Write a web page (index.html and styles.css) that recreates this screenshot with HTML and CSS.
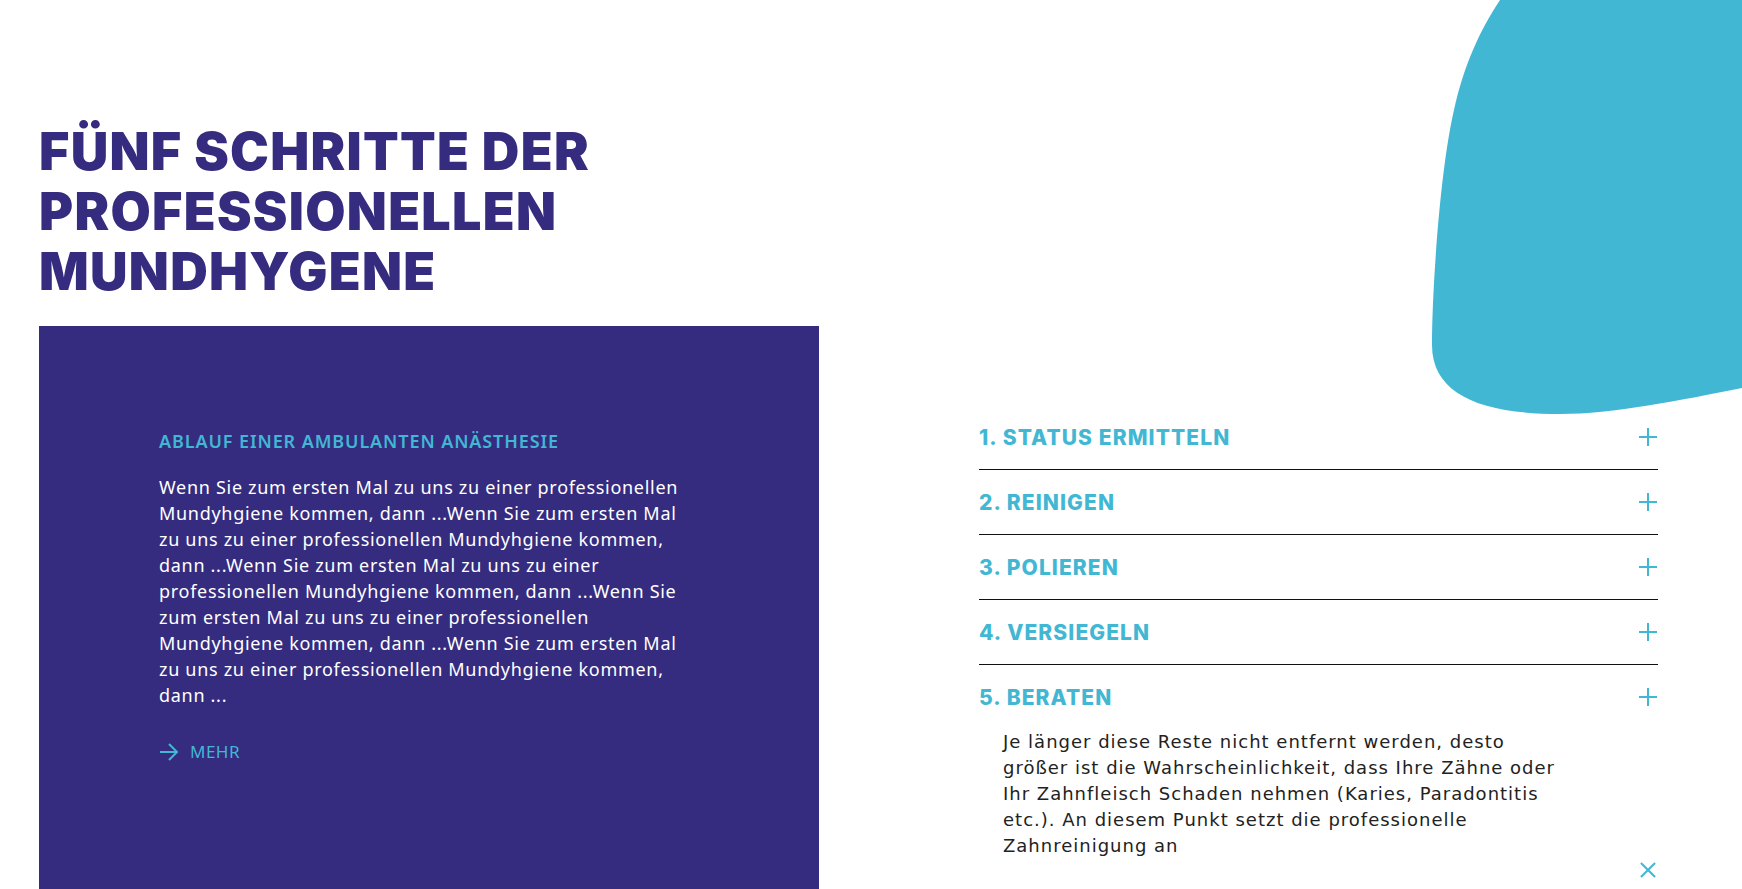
FILE: index.html
```html
<!DOCTYPE html>
<html lang="de">
<head>
<meta charset="utf-8">
<title>Fünf Schritte der professionellen Mundhygene</title>
<link rel="stylesheet" href="styles.css">
</head>
<body>
<div class="page">
  <svg class="blob" viewBox="0 0 310 416" width="310" height="416" aria-hidden="true">
    <path d="M68 0 H310 V388 C250 400 180 414 128 414 C50 414 0 395 0 345 C0 290 8 170 22 110 C32 65 48 30 68 0 Z" fill="#42b7d3"/>
  </svg>
  <h1 class="title">FÜNF SCHRITTE DER<br>PROFESSIONELLEN<br>MUNDHYGENE</h1>
  <div class="section">
    <div class="card">
      <h2 class="card-title">ABLAUF EINER AMBULANTEN ANÄSTHESIE</h2>
      <p class="card-text">Wenn Sie zum ersten Mal zu uns zu einer professionellen Mundyhgiene kommen, dann ...Wenn Sie zum ersten Mal zu uns zu einer professionellen Mundyhgiene kommen, dann ...Wenn Sie zum ersten Mal zu uns zu einer professionellen Mundyhgiene kommen, dann ...Wenn Sie zum ersten Mal zu uns zu einer professionellen Mundyhgiene kommen, dann ...Wenn Sie zum ersten Mal zu uns zu einer professionellen Mundyhgiene kommen, dann ...</p>
      <a class="more" href="#">
        <svg width="20" height="20" viewBox="0 0 20 20" aria-hidden="true"><path d="M1 10 H18 M10 2 L18 10 L10 18" fill="none" stroke="#42b7d3" stroke-width="2"/></svg>
        <span>MEHR</span>
      </a>
    </div>
    <div class="accordion">
      <div class="item">
        <div class="item-head"><span>1. STATUS ERMITTELN</span><span class="plus"></span></div>
      </div>
      <div class="item">
        <div class="item-head"><span>2. REINIGEN</span><span class="plus"></span></div>
      </div>
      <div class="item">
        <div class="item-head"><span>3. POLIEREN</span><span class="plus"></span></div>
      </div>
      <div class="item">
        <div class="item-head"><span>4. VERSIEGELN</span><span class="plus"></span></div>
      </div>
      <div class="item open">
        <div class="item-head"><span>5. BERATEN</span><span class="plus"></span></div>
        <p class="item-body">Je länger diese Reste nicht entfernt werden, desto größer ist die Wahrscheinlichkeit, dass Ihre Zähne oder Ihr Zahnfleisch Schaden nehmen (Karies, Paradontitis etc.). An diesem Punkt setzt die professionelle Zahnreinigung an</p>
        <div class="close-row"><span class="close"></span></div>
      </div>
    </div>
  </div>
</div>
</body>
</html>
```
FILE: styles.css
```css
html, body {
  margin: 0;
  padding: 0;
  background: #ffffff;
  overflow: hidden;
}
.page {
  position: relative;
  width: 1742px;
  height: 889px;
  overflow: hidden;
  padding-left: 39px;
  box-sizing: border-box;
}
.blob {
  position: absolute;
  top: 0;
  right: 0;
}
.title {
  margin: 0;
  padding-top: 122px;
  font-family: Inter, "Liberation Sans", sans-serif;
  font-weight: 900;
  font-size: 52px;
  line-height: 60px;
  letter-spacing: 1.3px;
  color: #352c80;
  height: 194px;
}
.section {
  display: flex;
  margin-top: 10px;
}
.card {
  width: 780px;
  height: 600px;
  background: #352c80;
  box-sizing: border-box;
  padding: 102px 120px 0 120px;
  flex-shrink: 0;
}
.card-title {
  margin: 0;
  font-family: "Noto Sans", sans-serif;
  font-weight: 600;
  font-size: 18px;
  line-height: 26px;
  letter-spacing: 0.9px;
  color: #42b7d3;
}
.card-text {
  margin: 20px 0 0 0;
  width: 530px;
  font-family: "Noto Sans", sans-serif;
  font-size: 18px;
  line-height: 26px;
  letter-spacing: 0.7px;
  color: #ffffff;
}
.more {
  display: flex;
  align-items: center;
  gap: 11px;
  margin-top: 32px;
  text-decoration: none;
  color: #42b7d3;
  font-family: "Noto Sans", sans-serif;
  font-size: 17px;
  letter-spacing: 0.5px;
}
.accordion {
  margin-left: 160px;
  width: 679px;
  padding-top: 79px;
}
.item {
  border-bottom: 1.5px solid #111;
}
.item.open {
  border-bottom: none;
}
.item-head {
  height: 64px;
  display: flex;
  align-items: center;
  justify-content: space-between;
  font-family: Inter, "Liberation Sans", sans-serif;
  font-weight: 800;
  font-size: 21px;
  letter-spacing: 1.1px;
  color: #42b7d3;
}
.plus {
  position: relative;
  width: 18px;
  height: 18px;
  margin-right: 1px;
}
.plus::before, .plus::after {
  content: "";
  position: absolute;
  background: #42b7d3;
}
.plus::before {
  left: 8px; top: 0; width: 2px; height: 18px;
}
.plus::after {
  top: 8px; left: 0; height: 2px; width: 18px;
}
.item-body {
  margin: 0 0 0 24px;
  width: 558px;
  font-family: "DejaVu Sans", sans-serif;
  font-size: 18px;
  line-height: 26px;
  letter-spacing: 1px;
  color: #222;
}
.close-row {
  display: flex;
  justify-content: flex-end;
  padding-top: 2px;
}
.close {
  position: relative;
  width: 18px;
  height: 18px;
  margin-right: 1px;
}
.close::before, .close::after {
  content: "";
  position: absolute;
  left: 8px; top: -1px; width: 2px; height: 20px;
  background: #42b7d3;
}
.close::before { transform: rotate(45deg); }
.close::after { transform: rotate(-45deg); }
```
